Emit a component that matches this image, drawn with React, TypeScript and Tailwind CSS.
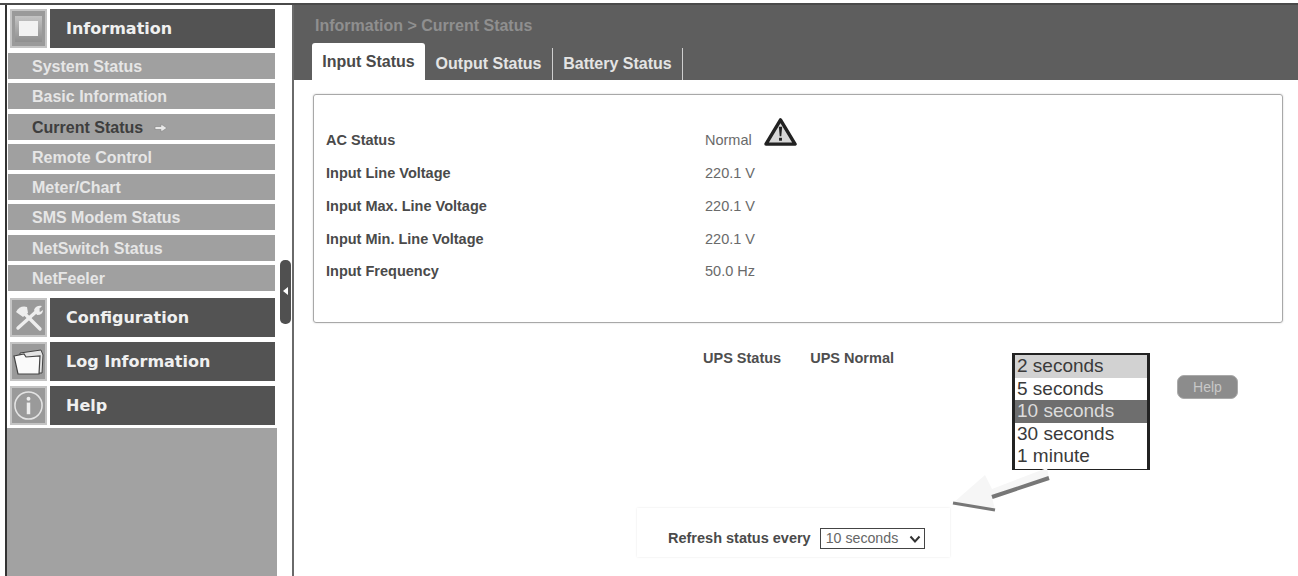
const subItems = [
  { label: "System Status" },
  { label: "Basic Information" },
  { label: "Current Status", active: true },
  { label: "Remote Control" },
  { label: "Meter/Chart" },
  { label: "SMS Modem Status" },
  { label: "NetSwitch Status" },
  { label: "NetFeeler" },
];

const rows = [
  { label: "AC Status", value: "Normal" },
  { label: "Input Line Voltage", value: "220.1 V" },
  { label: "Input Max. Line Voltage", value: "220.1 V" },
  { label: "Input Min. Line Voltage", value: "220.1 V" },
  { label: "Input Frequency", value: "50.0 Hz" },
];

const refreshOptions = ["2 seconds", "5 seconds", "10 seconds", "30 seconds", "1 minute"];

const MonitorIcon = () => (
  <div className="flex h-[26px] w-[27px] items-center justify-center bg-gradient-to-b from-[#c4c4c4] to-[#8f8f8f]">
    <div className="h-[15px] w-[19px] bg-[#f2f2f2]" />
  </div>
);

const ToolsIcon = () => (
  <svg viewBox="0 0 32 30" className="h-[30px] w-[32px]">
    <path d="M5 25 L25 7" stroke="#eee" strokeWidth="3.4" strokeLinecap="round" />
    <path d="M21 7 Q23 2 29 3 L25.5 6.5 L27 9 L30 7 Q30 12 24 12" fill="#eee" />
    <path d="M11 10 L27 26" stroke="#eee" strokeWidth="3.4" strokeLinecap="round" />
    <path d="M3 9 Q7 2 14 4 L15 10 L10 14 Z" fill="#eee" />
  </svg>
);

const FolderIcon = () => (
  <svg viewBox="0 0 32 30" className="h-[30px] w-[32px]">
    <path d="M7 6 L28 3 L30 8 L29 26 L7 26 Z" fill="#e4e4e4" stroke="#444" strokeWidth="1" />
    <path d="M1 9 L11 7 L13 10 L27 9 L26 27 L5 27 Z" fill="#fafafa" stroke="#444" strokeWidth="1.2" />
  </svg>
);

const InfoIcon = () => (
  <svg viewBox="0 0 32 32" className="h-[31px] w-[31px]">
    <circle cx="16" cy="16" r="14" fill="none" stroke="#e4e4e4" strokeWidth="1.6" />
    <circle cx="16" cy="9" r="2" fill="#eee" />
    <rect x="14.2" y="13" width="3.6" height="12" fill="#eee" />
  </svg>
);

function MainItem({ label, icon }: { label: string; icon: React.ReactNode }) {
  return (
    <div className="flex h-[39px] gap-[3px]">
      <div className="flex w-[37px] shrink-0 items-center justify-center border-2 border-[#c4c4c4] bg-[#9a9a9a]">
        {icon}
      </div>
      <div className="flex flex-1 items-center bg-[#535353] pl-[16px] font-['DejaVu_Sans'] text-[16px] font-bold text-[#f0f0f0]">
        {label}
      </div>
    </div>
  );
}

export default function App() {
  return (
    <div className="h-[576px] w-[1298px] overflow-hidden bg-white font-['Liberation_Sans',sans-serif]">
      <div className="h-[3px] bg-white" />
      <div className="flex h-[573px] border-t-2 border-[#4a4a4a]">
        {/* Sidebar */}
        <aside className="flex w-[292px] shrink-0 border-l-[5px] border-white">
          <div className="flex w-[272px] shrink-0 flex-col border-l-2 border-[#333] pl-[3px] pr-[2px] pt-[4px]">
            <MainItem label="Information" icon={<MonitorIcon />} />
            <nav className="-ml-[2px] mt-[5px] flex flex-col gap-[4.3px]">
              {subItems.map((item) => (
                <div
                  key={item.label}
                  className={`flex h-[26px] items-center gap-[11px] bg-[#a0a0a0] pl-[24px] pt-[2px] text-[16px] font-bold ${
                    item.active ? "text-[#3e3e3e]" : "text-[#e6e6e6]"
                  }`}
                >
                  {item.label}
                  {item.active && (
                    <svg viewBox="0 0 14 10" className="h-[10px] w-[14px]">
                      <path d="M1 3.5 H7 V1 L13 5 L7 9 V6.5 H1 Z" fill="#e8e8e8" stroke="#8a8a8a" strokeWidth="0.7" />
                    </svg>
                  )}
                </div>
              ))}
            </nav>
            <div className="mt-[7px] flex flex-col gap-[5px]">
              <MainItem label="Configuration" icon={<ToolsIcon />} />
              <MainItem label="Log Information" icon={<FolderIcon />} />
              <MainItem label="Help" icon={<InfoIcon />} />
            </div>
            <div className="-ml-[3px] -mr-[2px] mt-[3px] flex-1 bg-[#a2a2a2]" />
          </div>
          <div className="flex-1 pl-[3px] pt-[255px]">
            <div className="relative h-[64px] w-[11px] rounded-[5px] bg-[#505050]">
              <div className="absolute left-[3px] top-[27px] h-0 w-0 border-y-[4px] border-r-[5px] border-y-transparent border-r-white" />
            </div>
          </div>
        </aside>

        {/* Main */}
        <main className="relative flex-1 border-l-2 border-[#6a6a6a]">
          <header className="flex h-[75px] flex-col justify-between bg-[#5e5e5e]">
            <div className="pl-[21px] pt-[9px] text-[16px] font-bold text-[#8f8f8f]">Information &gt; Current Status</div>
            <div className="flex h-[37px] items-end pl-[18px] text-[16px] font-bold">
              <div className="flex h-[37px] w-[113px] items-center justify-center rounded-t-[3px] bg-white text-[#4a4a4a]">
                Input Status
              </div>
              <div className="flex h-[32px] w-[128px] items-center justify-center border-r border-[#cfcfcf] text-[#e4e4e4]">
                Output Status
              </div>
              <div className="flex h-[32px] w-[130px] items-center justify-center border-r border-[#cfcfcf] text-[#e4e4e4]">
                Battery Status
              </div>
            </div>
          </header>

          <section className="ml-[19px] mr-[15px] mt-[14px] h-[229px] rounded-[3px] border border-[#a8a8a8] pl-[12px] pt-[30px] shadow-[0_0_2px_#cccccc]">
            {rows.map((row) => (
              <div key={row.label} className="flex h-[32.7px] items-center">
                <div className="w-[379px] text-[14.5px] font-bold text-[#4a4a4a]">{row.label}</div>
                <div className="flex items-center text-[14.5px] text-[#6a6a6a]">
                  {row.value}
                  {row.value === "Normal" && (
                    <svg viewBox="0 0 34 32" className="ml-[12px] h-[33px] w-[33px] -translate-y-[10px]">
                      <path d="M17 4 L32 29 L2 29 Z" fill="#d8d8d8" stroke="#222" strokeWidth="3.5" strokeLinejoin="round" />
                      <path d="M15.3 11 L18.7 11 L17.8 21 L16.2 21 Z" fill="#222" />
                      <rect x="15.5" y="22.5" width="3" height="3" fill="#222" />
                    </svg>
                  )}
                </div>
              </div>
            ))}
          </section>

          <div className="ml-[409px] mt-[25px] flex gap-[29px] text-[14.5px] font-bold text-[#4e4e4e]">
            <span>UPS Status</span>
            <span>UPS Normal</span>
          </div>

          <div className="absolute left-[343px] top-[503px] flex h-[49px] w-[313px] items-start gap-[9px] pl-[31px] pt-[20px] shadow-[0_0_2px_#e6e6e6]">
            <span className="text-[14.5px] font-bold text-[#4a4a4a]">Refresh status every</span>
            <div className="flex h-[21px] w-[105px] items-center justify-between border border-[#444] pl-[5px] pr-[3px] text-[14.2px] text-[#666]">
              10 seconds
              <svg viewBox="0 0 12 8" className="h-[8px] w-[12px]">
                <path d="M1.5 1.5 L6 6.5 L10.5 1.5" fill="none" stroke="#333" strokeWidth="2" />
              </svg>
            </div>
          </div>

          {/* Dropdown callout */}
          <div className="absolute left-[718px] top-[348px] h-[117px] w-[138px] border-x-[3px] border-b border-t-2 border-[#222] text-[19px] leading-[22.5px] text-[#3a3a3a]">
            {refreshOptions.map((opt, i) => (
              <div
                key={opt}
                className={`pl-[2px] ${i === 0 ? "bg-[#d2d2d2]" : ""} ${i === 2 ? "bg-[#6e6e6e] text-[#dcdcdc]" : ""}`}
              >
                {opt}
              </div>
            ))}
          </div>
          <svg viewBox="0 0 105 50" className="absolute left-[656px] top-[460px] h-[50px] w-[105px]">
            <path d="M35 10 L42 24 L97 3 L99 13 L42 32 L45 45 L3 38 Z" fill="#f6f6f6" />
            <path d="M42 32 L99 13" fill="none" stroke="#777" strokeWidth="4" />
            <path d="M3 38 L45 45" fill="none" stroke="#777" strokeWidth="3" />
          </svg>

          <button className="absolute left-[883px] top-[370px] h-[24px] w-[61px] rounded-[7px] border border-[#aaa] bg-[#8c8c8c] text-[14px] text-[#c8c8c8]">
            Help
          </button>
        </main>
      </div>
    </div>
  );
}
